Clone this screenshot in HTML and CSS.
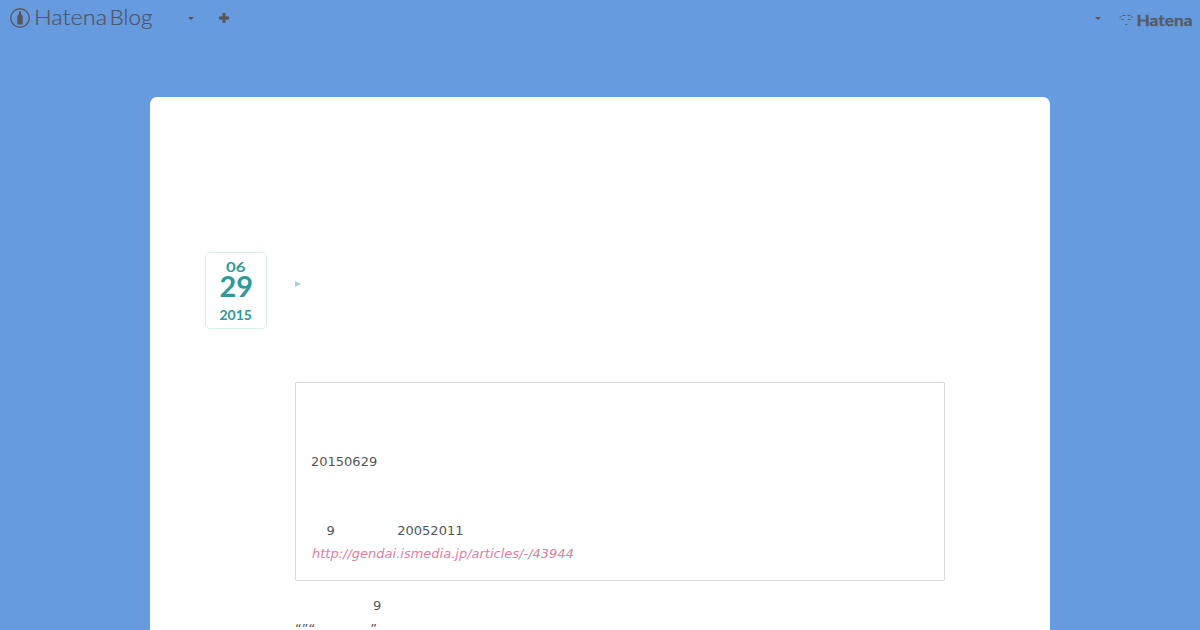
FILE: index.html
```html
<!DOCTYPE html>
<html lang="ja">
<head>
  <meta charset="UTF-8">
  <title>Hatena Blog</title>
  <link rel="stylesheet" href="styles.css">
</head>
<body>
  <header class="globalheader">
    <svg class="blog-logo" width="160" height="36" viewBox="0 0 160 36">
      <circle cx="20" cy="18" r="9.3" fill="none" stroke="#555b66" stroke-width="1.4"/>
      <path d="M17.300 24.500v-8.500l1.700-2v-2.500h2v2.500l1.700 2v8.500z" fill="#595654"/>
      <text class="blog-name" x="34" y="25" textLength="73" lengthAdjust="spacingAndGlyphs">Hatena</text>
      <text class="blog-name" x="109.500" y="25" textLength="43" lengthAdjust="spacingAndGlyphs">Blog</text>
    </svg>
    <span class="caret"></span>
    <svg class="plus" width="10" height="10" viewBox="0 0 10 10">
      <path d="M5 0v10M0 5h10" stroke="#555" stroke-width="2.8"/>
    </svg>
    <span class="caret caret-right"></span>
    <svg class="hatena-logo" width="75" height="36" viewBox="0 0 75 36">
      <g fill="none" stroke="#555b66" stroke-width="1">
        <path d="M.5 17.500l2-1M3.500 15.500h3M8.500 15.500h3M12 16.500l2 1"/>
        <path d="M2 19.500h3M9 19.500h3M6 24.500h2.500" opacity=".8"/>
      </g>
      <text class="hatena-name" x="17.500" y="26" textLength="56" lengthAdjust="spacingAndGlyphs">Hatena</text>
    </svg>
  </header>

  <main class="container">
    <div class="entry-header">
      <a class="date">
        <svg width="60" height="75" viewBox="0 0 60 75">
          <text x="20" y="19" font-size="13.500" textLength="19.500" lengthAdjust="spacingAndGlyphs">06</text>
          <text x="13.500" y="44" font-size="28" textLength="33.500" lengthAdjust="spacingAndGlyphs">29</text>
          <text x="13.500" y="67" font-size="14" textLength="32.500" lengthAdjust="spacingAndGlyphs">2015</text>
        </svg>
      </a>
      <span class="category-arrow"></span>
    </div>

    <div class="entry-content">
      <blockquote>
        <p class="title">20150629</p>
        <p><span class="gap-s"></span>9<span class="gap-l"></span>20052011</p>
        <cite><a>http://gendai.ismedia.jp/articles/-/43944</a></cite>
      </blockquote>
      <p><span class="gap-xl"></span>9</p>
      <p>“”“<span class="gap-m"></span>”</p>
    </div>
  </main>
</body>
</html>
```
FILE: styles.css
```css
html, body {
  height: 100%;
  margin: 0;
  overflow: hidden;
}

body {
  background: #679bdf;
  color: #555;
  font: 13px/23px "DejaVu Sans", sans-serif;
}

.globalheader {
  display: flex;
  align-items: center;
  height: 36px;
}

.globalheader svg {
  flex: none;
}

.blog-logo {
  margin-right: 28px;
}

.blog-name {
  font: 300 21.5px Lato, sans-serif;
  fill: #4f5561;
  stroke: #4f5561;
  stroke-width: .2px;
}

.caret {
  border: 3px solid transparent;
  border-top-color: #555;
  border-bottom: 0;
}

.plus {
  margin-left: 25px;
}

.caret-right {
  margin-left: auto;
  margin-right: 18px;
}

.hatena-logo {
  margin-right: 6px;
}

.hatena-name {
  font: 700 16px Lato, sans-serif;
  fill: #555b66;
  stroke: #555b66;
  stroke-width: .3px;
}

.container {
  box-sizing: border-box;
  width: 900px;
  height: 533px;
  margin: 61px auto 0;
  padding: 155px 105px 0 55px;
  background: #fff;
  border-radius: 7px 7px 0 0;
  overflow: hidden;
}

.entry-header {
  display: flex;
}

.date {
  width: 60px;
  height: 75px;
  border: 1px solid #d9efee;
  border-radius: 5px;
}

.date svg {
  display: block;
}

.date text {
  font-family: Lato, sans-serif;
  font-weight: 700;
  fill: #2e9999;
}

.category-arrow {
  height: 0;
  margin: 29px 0 0 28px;
  border: 3px solid transparent;
  border-left: 6px solid #a9d0dc;
  border-right: 0;
}

.entry-content {
  margin: 53px 0 0 90px;
}

blockquote {
  margin: 0 0 13px;
  padding: 67px 15px 15px;
  border: 1px solid #d9d9d9;
  border-radius: 2px;
}

p {
  margin: 0;
}

.title {
  margin-bottom: 46px;
}

cite {
  display: block;
  padding-left: 1px;
}

cite a {
  color: #d9829f;
}

.gap-s,
.gap-m,
.gap-l,
.gap-xl {
  display: inline-block;
}

.gap-s {
  width: 15.5px;
}

.gap-m {
  width: 55px;
}

.gap-l {
  width: 62.5px;
}

.gap-xl {
  width: 78px;
}
```
